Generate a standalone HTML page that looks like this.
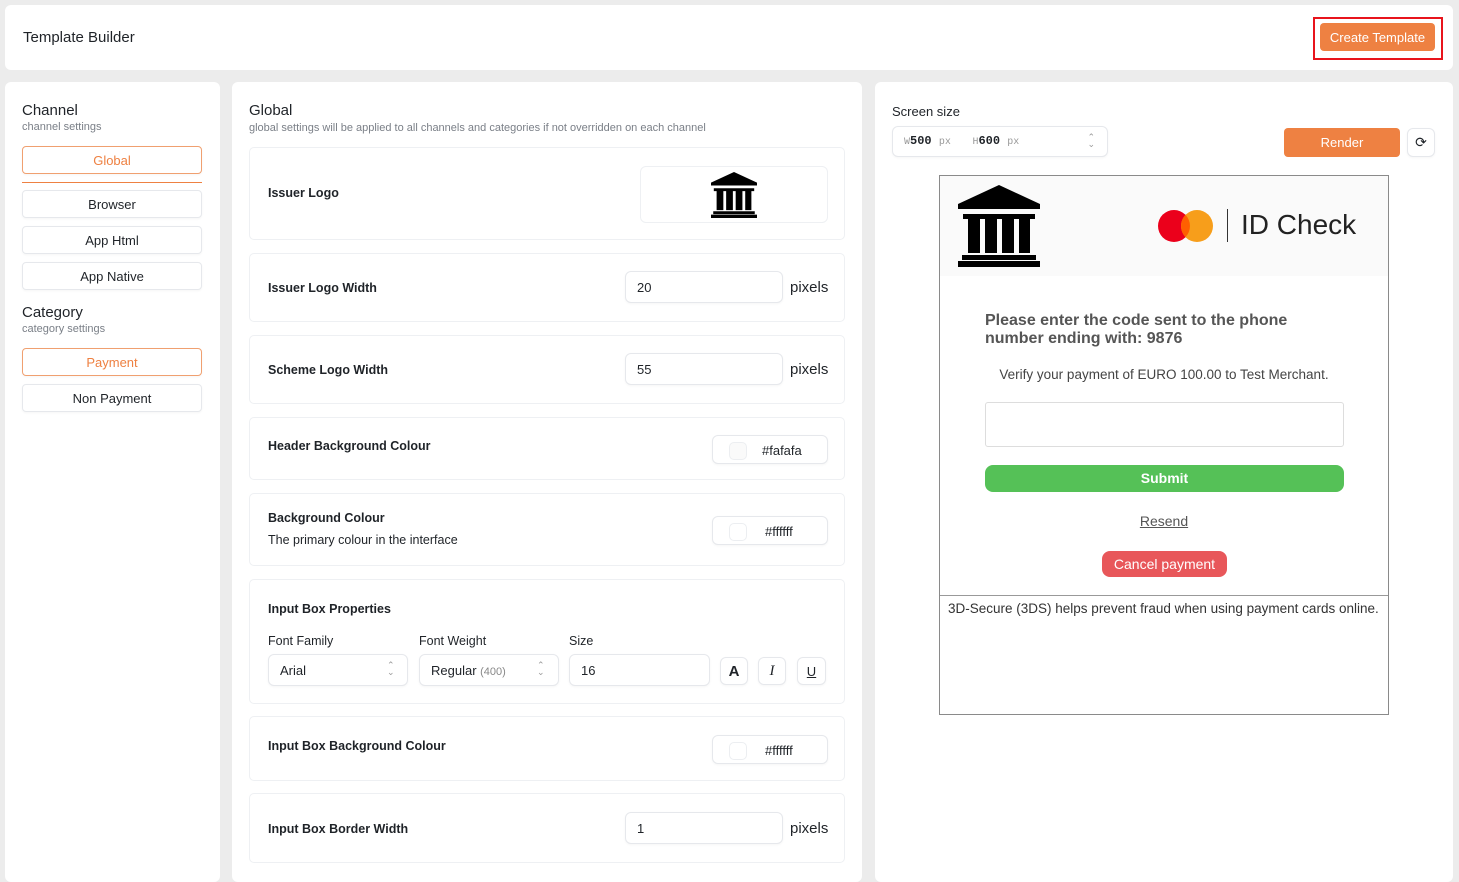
<!DOCTYPE html>
<html><head><meta charset="utf-8"><style>
*{box-sizing:border-box;margin:0;padding:0}
body{width:1459px;height:870px;background:#ececec;font-family:"Liberation Sans",Arial,sans-serif;color:#1f2328;position:relative;overflow:hidden}
.a{position:absolute}
.card{position:absolute;background:#fff;border-radius:6px}
.sub{border:1px solid #eef0f3;border-radius:5px;background:#fff;position:absolute;left:249px;width:596px}
.lbl{position:absolute;left:18px;font-size:12.5px;font-weight:bold;color:#1f2328}
.inp{position:absolute;border:1px solid #e6e8ec;border-radius:6px;background:#fff;font-size:13px;box-shadow:0 1px 2px rgba(0,0,0,.04)}
.btn{position:absolute;left:22px;width:180px;height:28px;border:1px solid #e6e8ec;border-radius:4px;font-size:13px;text-align:center;line-height:26px;box-shadow:0 1px 2px rgba(0,0,0,.04)}
.px{position:absolute;font-size:15px;color:#1f2328}
.sw{position:absolute;left:16px;top:6px;width:18px;height:18px;border:1px solid #eceef1;border-radius:5px}
</style></head><body>
<div class="card" style="left:5px;top:5px;width:1448px;height:65px"></div>
<div class="a" style="left:23px;top:29px;font-size:15px">Template Builder</div>
<div class="a" style="left:1313px;top:17px;width:130px;height:43px;border:2px solid #e8141c"></div>
<div class="a" style="left:1320px;top:23px;width:115px;height:28px;background:#ee8142;border-radius:4px;color:#fff;font-size:13px;text-align:center;line-height:29px">Create Template</div>

<div class="card" style="left:5px;top:82px;width:215px;height:800px"></div>
<div class="a" style="left:22px;top:102px;font-size:15px">Channel</div>
<div class="a" style="left:22px;top:121px;font-size:11px;color:#7a7f87">channel settings</div>
<div class="btn" style="top:146px;border-color:#f0a070;color:#ee8142;line-height:27px">Global</div>
<div class="a" style="left:22px;top:182px;width:180px;height:1px;background:#ee8142"></div>
<div class="btn" style="top:190px;line-height:27px">Browser</div>
<div class="btn" style="top:226px;line-height:27px">App Html</div>
<div class="btn" style="top:262px;line-height:27px">App Native</div>
<div class="a" style="left:22px;top:304px;font-size:15px">Category</div>
<div class="a" style="left:22px;top:323px;font-size:11px;color:#7a7f87">category settings</div>
<div class="btn" style="top:348px;border-color:#f0a070;color:#ee8142;line-height:27px">Payment</div>
<div class="btn" style="top:384px;line-height:27px">Non Payment</div>

<div class="card" style="left:232px;top:82px;width:630px;height:800px"></div>
<div class="a" style="left:249px;top:102px;font-size:15px">Global</div>
<div class="a" style="left:249px;top:122px;font-size:11px;color:#7a7f87">global settings will be applied to all channels and categories if not overridden on each channel</div>

<div class="sub" style="top:147px;height:93px"><div class="lbl" style="top:38px">Issuer Logo</div>
<div class="inp" style="left:390px;top:18px;width:188px;height:57px;box-shadow:none;border-color:#eef0f3">
<svg class="a" style="left:70px;top:5px" width="46" height="46" viewBox="0 0 82 82"><path d="M41 0L0 19v5h82v-5z M5 29h72v5H5z M10 34h12v34H10z M27 34h12v34H27z M44 34h12v34H44z M61 34h11v34H61z M4 70h74v5H4z M0 76h82v6H0z" fill="#000"/></svg></div></div>

<div class="sub" style="top:253px;height:69px"><div class="lbl" style="top:27px">Issuer Logo Width</div>
<div class="inp" style="left:375px;top:17px;width:158px;height:32px;padding:8px 11px">20</div><div class="px" style="left:540px;top:25px">pixels</div></div>

<div class="sub" style="top:335px;height:69px"><div class="lbl" style="top:27px">Scheme Logo Width</div>
<div class="inp" style="left:375px;top:17px;width:158px;height:32px;padding:8px 11px">55</div><div class="px" style="left:540px;top:25px">pixels</div></div>

<div class="sub" style="top:417px;height:63px"><div class="lbl" style="top:21px">Header Background Colour</div>
<div class="inp" style="left:462px;top:17px;width:116px;height:29px"><div class="sw" style="background:#fafafa"></div><span class="a" style="left:49px;top:7px">#fafafa</span></div></div>

<div class="sub" style="top:493px;height:73px"><div class="lbl" style="top:17px">Background Colour</div>
<div class="a" style="left:18px;top:39px;font-size:12.5px">The primary colour in the interface</div>
<div class="inp" style="left:462px;top:22px;width:116px;height:29px"><div class="sw"></div><span class="a" style="left:52px;top:7px">#ffffff</span></div></div>

<div class="sub" style="top:579px;height:125px"><div class="lbl" style="top:22px">Input Box Properties</div>
<div class="a" style="left:18px;top:54px;font-size:12.5px">Font Family</div>
<div class="a" style="left:169px;top:54px;font-size:12.5px">Font Weight</div>
<div class="a" style="left:319px;top:54px;font-size:12.5px">Size</div>
<div class="inp" style="left:18px;top:74px;width:140px;height:32px;padding:8px 11px">Arial</div>
<div class="inp" style="left:169px;top:74px;width:140px;height:32px;padding:8px 11px">Regular <span style="color:#888;font-size:11px">(400)</span></div>
<div class="inp" style="left:319px;top:74px;width:141px;height:32px;padding:8px 11px">16</div>
<div class="inp" style="left:470px;top:77px;width:28px;height:28px;text-align:center;line-height:27px;font-weight:bold;font-size:15px">A</div>
<div class="inp" style="left:508px;top:77px;width:28px;height:28px;text-align:center;line-height:27px;font-style:italic;font-family:'Liberation Serif',serif;font-size:15px">I</div>
<div class="inp" style="left:547px;top:77px;width:29px;height:28px;text-align:center;line-height:27px;text-decoration:underline;font-size:13px">U</div>
<div class="a" style="left:137px;top:82px;font-size:9px;color:#999;line-height:7px">⌃<br>⌄</div>
<div class="a" style="left:287px;top:82px;font-size:9px;color:#999;line-height:7px">⌃<br>⌄</div></div>

<div class="sub" style="top:716px;height:65px"><div class="lbl" style="top:22px">Input Box Background Colour</div>
<div class="inp" style="left:462px;top:18px;width:116px;height:29px"><div class="sw"></div><span class="a" style="left:52px;top:7px">#ffffff</span></div></div>

<div class="sub" style="top:793px;height:70px"><div class="lbl" style="top:28px">Input Box Border Width</div>
<div class="inp" style="left:375px;top:18px;width:158px;height:32px;padding:8px 11px">1</div><div class="px" style="left:540px;top:26px">pixels</div></div>

<div class="card" style="left:875px;top:82px;width:578px;height:800px"></div>
<div class="a" style="left:892px;top:104px;font-size:13px">Screen size</div>
<div class="inp" style="left:892px;top:126px;width:216px;height:31px;font-family:'Liberation Mono',monospace;padding:7px 11px;font-size:12px"><span style="color:#999;font-size:10px">W</span><b>500</b> <span style="color:#999;font-size:10px">px</span>&nbsp;&nbsp; <span style="color:#999;font-size:10px">H</span><b>600</b> <span style="color:#999;font-size:10px">px</span><span class="a" style="right:12px;top:8px;font-size:9px;color:#999;line-height:7px">⌃<br>⌄</span></div>
<div class="a" style="left:1284px;top:128px;width:116px;height:29px;background:#ee8142;border-radius:4px;color:#fff;font-size:13px;text-align:center;line-height:29px">Render</div>
<div class="inp" style="left:1407px;top:128px;width:28px;height:29px;text-align:center;line-height:27px;font-size:14px">⟳</div>

<div class="a" style="left:939px;top:175px;width:450px;height:540px;border:1px solid #8a8a8a;background:#fff"></div>
<div class="a" style="left:940px;top:176px;width:448px;height:100px;background:#fafafa"></div>
<svg class="a" style="left:958px;top:185px" width="82" height="82" viewBox="0 0 82 82"><path d="M41 0L0 19v5h82v-5z M5 29h72v5H5z M10 34h12v34H10z M27 34h12v34H27z M44 34h12v34H44z M61 34h11v34H61z M4 70h74v5H4z M0 76h82v6H0z" fill="#000"/></svg>
<svg class="a" style="left:1158px;top:209px" width="58" height="34"><circle cx="16" cy="17" r="16" fill="#eb001b"/><circle cx="39" cy="17" r="16" fill="#f79e1b"/><path d="M27.5 5.9a16 16 0 0 1 0 22.2a16 16 0 0 1 0-22.2z" fill="#ff5f00"/></svg>
<div class="a" style="left:1227px;top:209px;width:1px;height:33px;background:#333"></div>
<div class="a" style="left:1241px;top:209px;font-size:28px;color:#222">ID Check</div>
<div class="a" style="left:985px;top:312px;font-size:16px;font-weight:bold;color:#555;line-height:18px">Please enter the code sent to the phone<br>number ending with: 9876</div>
<div class="a" style="left:940px;top:367px;width:448px;text-align:center;font-size:13.5px;color:#444">Verify your payment of EURO 100.00 to Test Merchant.</div>
<div class="a" style="left:985px;top:402px;width:359px;height:45px;border:1px solid #ddd;border-radius:3px"></div>
<div class="a" style="left:985px;top:465px;width:359px;height:27px;background:#55c157;border-radius:8px;color:#fff;font-weight:bold;font-size:14px;text-align:center;line-height:27px">Submit</div>
<div class="a" style="left:940px;top:513px;width:448px;text-align:center;font-size:14px;color:#555;text-decoration:underline">Resend</div>
<div class="a" style="left:1102px;top:551px;width:125px;height:26px;background:#e8575a;border-radius:8px;color:#fff;font-size:14px;text-align:center;line-height:26px">Cancel payment</div>
<div class="a" style="left:940px;top:595px;width:448px;height:1px;background:#999"></div>
<div class="a" style="left:948px;top:601px;font-size:13.5px;color:#333">3D-Secure (3DS) helps prevent fraud when using payment cards online.</div>
</body></html>
